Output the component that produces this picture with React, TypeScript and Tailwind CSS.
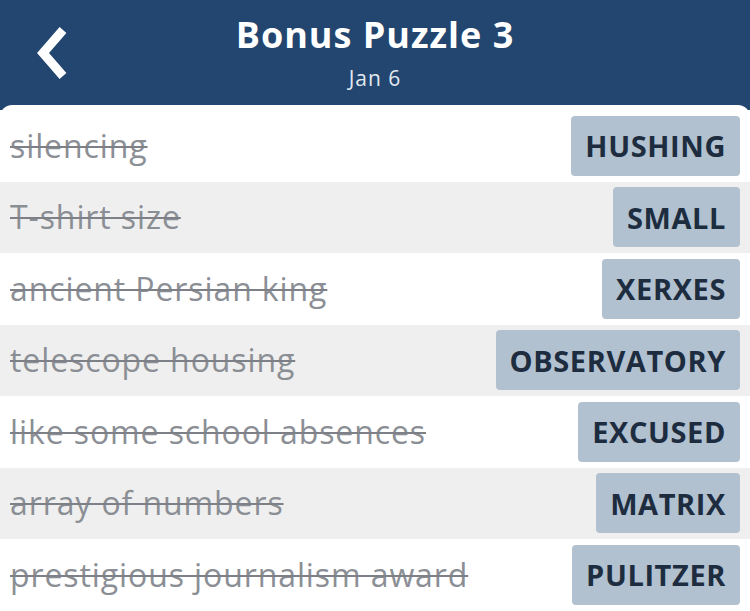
const clues = [
  { clue: "silencing", answer: "HUSHING" },
  { clue: "T-shirt size", answer: "SMALL" },
  { clue: "ancient Persian king", answer: "XERXES" },
  { clue: "telescope housing", answer: "OBSERVATORY" },
  { clue: "like some school absences", answer: "EXCUSED" },
  { clue: "array of numbers", answer: "MATRIX" },
  { clue: "prestigious journalism award", answer: "PULITZER" },
];

function BackIcon() {
  return (
    <svg width="36" height="54" viewBox="0 0 36 54" fill="none">
      <path
        d="M29 4 L9 27 L29 50"
        stroke="white"
        strokeWidth="9"
        strokeLinecap="butt"
        strokeLinejoin="miter"
      />
    </svg>
  );
}

export default function App() {
  return (
    <div className="h-[611px] w-[750px] overflow-hidden bg-[#22466f] font-['Open_Sans','Noto_Sans',sans-serif]">
      <header className="relative flex h-[105px] flex-col items-center pt-[12px] text-white">
        <button className="absolute left-[34px] top-[26px]">
          <BackIcon />
        </button>
        <h1 className="text-[36px] font-bold leading-[46px] tracking-[1px]">Bonus Puzzle 3</h1>
        <p className="mt-[7px] text-[21px] leading-[26px] tracking-[1px] text-[#e3e9f0]">Jan 6</p>
      </header>

      <main className="rounded-t-[12px] bg-white pt-[5px]">
        {clues.map((item, index) => (
          <div
            key={item.answer}
            className={`flex h-[71.5px] items-center justify-between pl-[10px] pr-[10px] ${
              index % 2 === 1 ? "bg-[#efefef]" : "bg-white"
            }`}
          >
            <span className="text-[32px] tracking-[0.9px] text-[#8b8f95] line-through decoration-[#7d8187] decoration-[2px]">
              {item.clue}
            </span>
            <span className="flex h-[60px] items-center rounded-[4px] bg-[#b1c1cf] px-[14px] text-[29px] font-bold tracking-[0.6px] text-[#1d2d3f]">
              {item.answer}
            </span>
          </div>
        ))}
      </main>
    </div>
  );
}
